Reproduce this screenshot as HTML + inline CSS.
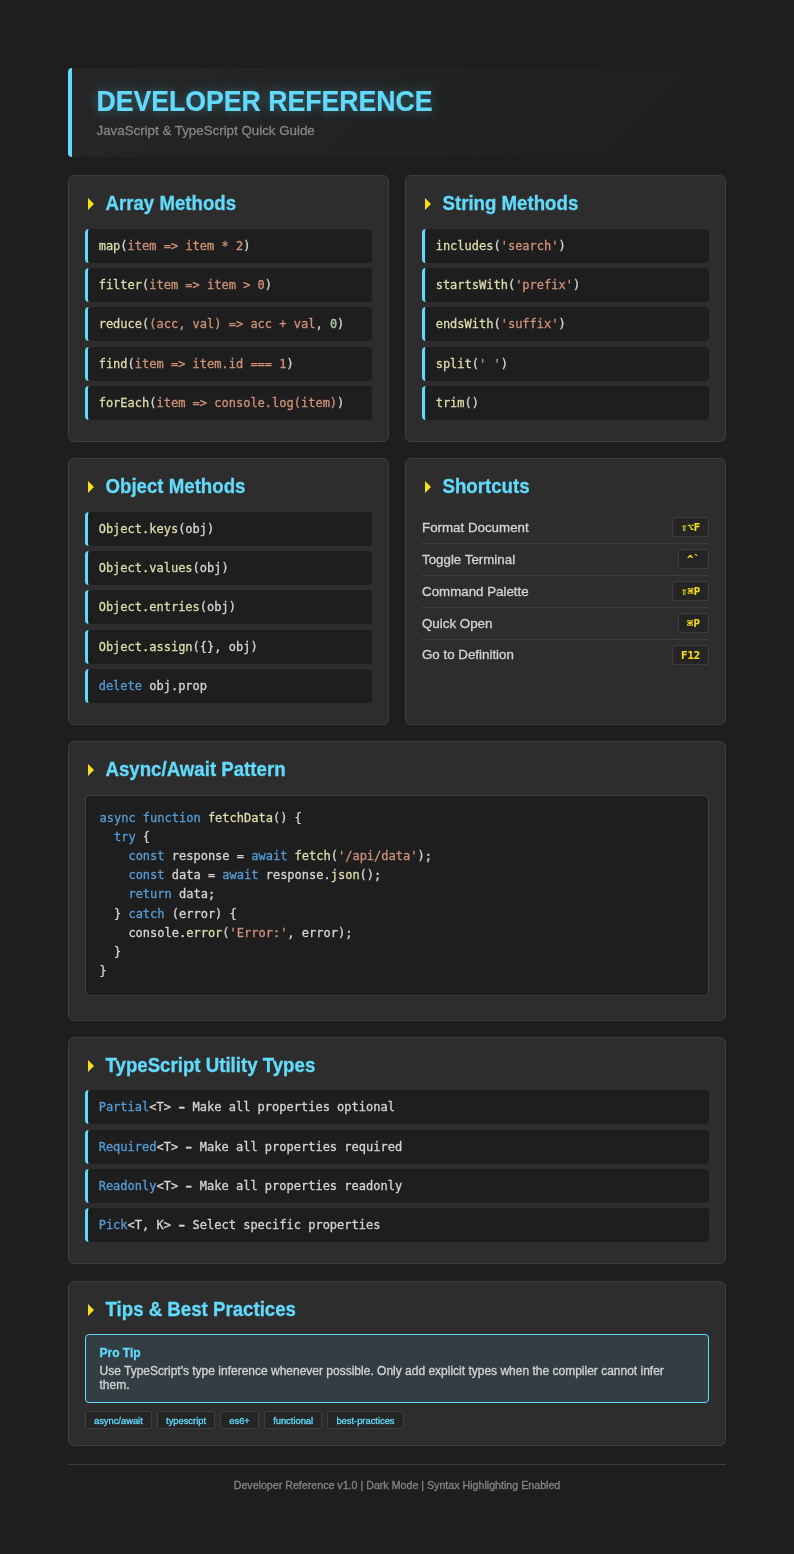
<!DOCTYPE html>
<html lang="en">
<head>
<meta charset="utf-8">
<title>Developer Reference</title>
<style>
*{box-sizing:border-box;margin:0;padding:0}
html,body{background:#1e1e1e}
body{width:794px;height:1554px;overflow:hidden;font-family:"Liberation Sans",sans-serif;color:#d4d4d4;font-size:13.333px;-webkit-text-stroke:0.3px}
.page{position:relative;will-change:transform;width:794px;height:1554px;padding:68px 68px 0 68px}
.hdr{height:89px;border-left:4px solid #61dafb;border-radius:4px;background:linear-gradient(135deg,#262627 0%,#1e1e1e 100%);padding:0 0 0 24px;margin-bottom:18.2px;position:relative}
.hdr h1{position:absolute;left:24.4px;top:17.7px;font-size:26.667px;transform:scaleY(1.085);transform-origin:0 25.1px;-webkit-text-stroke:0.2px;line-height:32px;font-weight:700;color:#61dafb;white-space:nowrap;text-shadow:0 0 10px rgba(97,218,251,.42)}
.hdr p{position:absolute;left:24.5px;top:54.5px;font-size:13.333px;line-height:16px;color:#858585;white-space:nowrap}
.grid{display:flex;gap:16px;margin-bottom:16px}
.grid .card{width:321px;margin-bottom:0}
.card{background:#2d2d2d;border:1px solid #3e3e42;border-radius:6px;padding:16px 16px 16px 16px;margin-bottom:16px}
h2{font-size:18.667px;line-height:23px;height:23px;font-weight:700;color:#61dafb;margin-bottom:13.5px;padding-left:20.5px;position:relative;white-space:nowrap}
h2 span{display:inline-block;transform:scaleY(1.05);transform-origin:0 17.5px}
h2 i{position:absolute;left:3px;top:6.2px;width:0;height:0;border-top:6px solid transparent;border-bottom:6px solid transparent;border-left:6.7px solid #f7df1e}
.ci{font-family:"DejaVu Sans Mono","Liberation Mono",monospace;font-size:12px;line-height:18px;height:34px;padding:8px 10.667px;background:#1e1e1e;border-left:3px solid #61dafb;border-radius:4px;margin-bottom:5.3px;white-space:pre;color:#d4d4d4;overflow:hidden}
.d{display:inline-block;transform:translateY(-.6px) scale(1.65,1.3)}
.f{color:#dcdcaa}.s{color:#ce9178}.n{color:#b5cea8}.k{color:#569cd6}
.sc{display:flex;justify-content:space-between;align-items:center;height:32px;border-bottom:1px solid #3e3e42;font-size:13.333px;line-height:16px}
.sc:last-child{border-bottom:0;height:31px}
.sc span{position:relative;top:.6px}
.sc:last-child span{top:0}
kbd{display:block;font-family:"DejaVu Sans Mono","Liberation Mono",monospace;font-weight:700;font-size:10.667px;line-height:20.4px;height:20px;width:36.7px;text-align:center;background:#252526;border:1px solid #3e3e42;border-radius:3px;color:#f7df1e;white-space:pre;-webkit-text-stroke:0.1px}
kbd.w2{width:31.2px}
pre.cb{font-family:"DejaVu Sans Mono","Liberation Mono",monospace;font-size:12px;line-height:19.2px;background:#1e1e1e;border:1px solid #3e3e42;border-radius:4px;padding:13px 13.5px 11px;margin-bottom:8.1px;height:201px;color:#d4d4d4;overflow:hidden}
.tip{height:69px;border:1px solid #61dafb;border-radius:4px;background:#333e44;padding:11px 13.5px 0 13.5px;margin-bottom:8px}
.tip b{display:block;font-size:12px;line-height:14px;color:#61dafb;font-weight:700;margin-bottom:4.8px}
.tip span{display:block;font-size:12px;line-height:13.6px;color:#d4d4d4}
.tags{display:flex;gap:5.333px;height:18px}
.tags span{height:18px;border:1px solid #3e3e42;border-radius:3px;background:#252526;color:#61dafb;font-size:9.333px;line-height:16px;padding:.7px 8px 0;white-space:nowrap}
.ftr{position:absolute;left:68px;width:658px;top:1464px;border-top:1px solid #3e3e42;text-align:center;font-size:10.667px;line-height:13px;color:#858585;padding-top:13.5px}
</style>
</head>
<body>
<div class="page">
  <div class="hdr">
    <h1>DEVELOPER REFERENCE</h1>
    <p>JavaScript &amp; TypeScript Quick Guide</p>
  </div>

  <div class="grid">
    <div class="card">
      <h2><i></i><span>Array Methods</span></h2>
      <div class="ci"><span class="f">map</span>(<span class="s">item =&gt; item * 2</span>)</div>
      <div class="ci"><span class="f">filter</span>(<span class="s">item =&gt; item &gt; 0</span>)</div>
      <div class="ci"><span class="f">reduce</span>(<span class="s">(acc, val) =&gt; acc + val</span>, <span class="n">0</span>)</div>
      <div class="ci"><span class="f">find</span>(<span class="s">item =&gt; item.id === 1</span>)</div>
      <div class="ci"><span class="f">forEach</span>(<span class="s">item =&gt; console.log(item)</span>)</div>
    </div>
    <div class="card">
      <h2><i></i><span>String Methods</span></h2>
      <div class="ci"><span class="f">includes</span>(<span class="s">'search'</span>)</div>
      <div class="ci"><span class="f">startsWith</span>(<span class="s">'prefix'</span>)</div>
      <div class="ci"><span class="f">endsWith</span>(<span class="s">'suffix'</span>)</div>
      <div class="ci"><span class="f">split</span>(<span class="s">' '</span>)</div>
      <div class="ci"><span class="f">trim</span>()</div>
    </div>
  </div>

  <div class="grid">
    <div class="card">
      <h2><i></i><span>Object Methods</span></h2>
      <div class="ci"><span class="f">Object.keys</span>(obj)</div>
      <div class="ci"><span class="f">Object.values</span>(obj)</div>
      <div class="ci"><span class="f">Object.entries</span>(obj)</div>
      <div class="ci"><span class="f">Object.assign</span>({}, obj)</div>
      <div class="ci"><span class="k">delete</span> obj.prop</div>
    </div>
    <div class="card">
      <h2><i></i><span>Shortcuts</span></h2>
      <div class="sc"><span>Format Document</span><kbd>&#x21E7;&#x2325;F</kbd></div>
      <div class="sc"><span>Toggle Terminal</span><kbd class="w2">^`</kbd></div>
      <div class="sc"><span>Command Palette</span><kbd>&#x21E7;&#x2318;P</kbd></div>
      <div class="sc"><span>Quick Open</span><kbd class="w2">&#x2318;P</kbd></div>
      <div class="sc"><span>Go to Definition</span><kbd>F12</kbd></div>
    </div>
  </div>

  <div class="card">
    <h2><i></i><span>Async/Await Pattern</span></h2>
<pre class="cb"><span class="k">async</span> <span class="k">function</span> <span class="f">fetchData</span>() {
  <span class="k">try</span> {
    <span class="k">const</span> response = <span class="k">await</span> <span class="f">fetch</span>(<span class="s">'/api/data'</span>);
    <span class="k">const</span> data = <span class="k">await</span> response.<span class="f">json</span>();
    <span class="k">return</span> data;
  } <span class="k">catch</span> (error) {
    console.<span class="f">error</span>(<span class="s">'Error:'</span>, error);
  }
}</pre>
  </div>

  <div class="card" style="margin-bottom:16.3px">
    <h2><i></i><span>TypeScript Utility Types</span></h2>
    <div class="ci"><span class="k">Partial</span>&lt;T&gt; <span class="d">-</span> Make all properties optional</div>
    <div class="ci"><span class="k">Required</span>&lt;T&gt; <span class="d">-</span> Make all properties required</div>
    <div class="ci"><span class="k">Readonly</span>&lt;T&gt; <span class="d">-</span> Make all properties readonly</div>
    <div class="ci"><span class="k">Pick</span>&lt;T, K&gt; <span class="d">-</span> Select specific properties</div>
  </div>

  <div class="card">
    <h2><i></i><span>Tips &amp; Best Practices</span></h2>
    <div class="tip"><b>Pro Tip</b><span>Use TypeScript's type inference whenever possible. Only add explicit types when the compiler cannot infer them.</span></div>
    <div class="tags"><span>async/await</span><span>typescript</span><span>es6+</span><span>functional</span><span>best-practices</span></div>
  </div>

  <div class="ftr">Developer Reference v1.0 | Dark Mode | Syntax Highlighting Enabled</div>
</div>
</body>
</html>
